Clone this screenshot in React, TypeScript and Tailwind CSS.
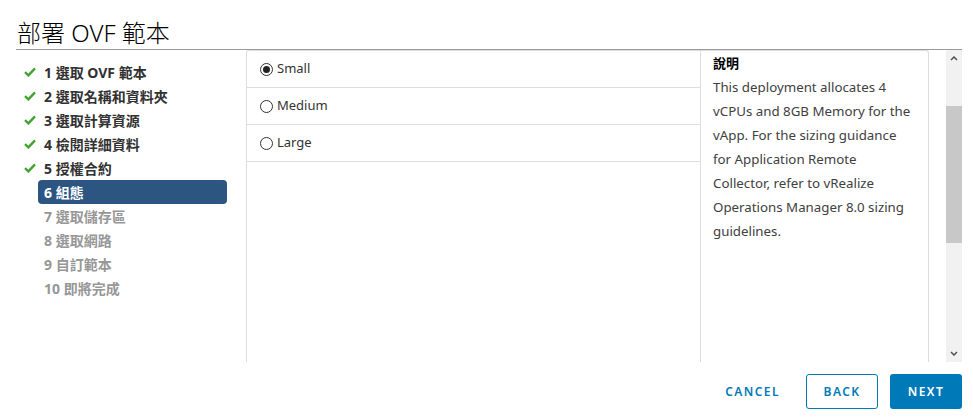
import React from 'react';

const steps = [
  { n: 1, label: '選取 OVF 範本', state: 'done' },
  { n: 2, label: '選取名稱和資料夾', state: 'done' },
  { n: 3, label: '選取計算資源', state: 'done' },
  { n: 4, label: '檢閱詳細資料', state: 'done' },
  { n: 5, label: '授權合約', state: 'done' },
  { n: 6, label: '組態', state: 'active' },
  { n: 7, label: '選取儲存區', state: 'todo' },
  { n: 8, label: '選取網路', state: 'todo' },
  { n: 9, label: '自訂範本', state: 'todo' },
  { n: 10, label: '即將完成', state: 'todo' },
];

const sizes = ['Small', 'Medium', 'Large'];

const descLines = [
  'This deployment allocates 4',
  'vCPUs and 8GB Memory for the',
  'vApp. For the sizing guidance',
  'for Application Remote',
  'Collector, refer to vRealize',
  'Operations Manager 8.0 sizing',
  'guidelines.',
];

function Check() {
  return (
    <svg width="12" height="10" viewBox="0 0 12 10" className="block">
      <path d="M1 5.2 L4.4 8.4 L11 1.4" fill="none" stroke="#43a332" strokeWidth="2.4" strokeLinejoin="miter" />
    </svg>
  );
}

function Radio({ checked }: { checked: boolean }) {
  return (
    <span className="w-[13px] h-[13px] rounded-full border border-[#333] flex items-center justify-center shrink-0 bg-white">
      {checked && <span className="w-[7px] h-[7px] rounded-full bg-[#222]" />}
    </span>
  );
}

export default function App() {
  return (
    <div
      className="w-[973px] h-[419px] bg-white flex flex-col overflow-hidden"
      style={{ fontFamily: '"Noto Sans", "Noto Sans CJK TC", sans-serif' }}
    >
      {/* header */}
      <div className="ml-4 mr-[11px] h-[50px] border-b border-[#9a9a9a] flex items-end pb-[2px] shrink-0">
        <h1 className="text-[24px] leading-[28px] font-light text-black pl-[1px]">部署 OVF 範本</h1>
      </div>

      {/* body */}
      <div className="flex h-[312px] shrink-0">
        {/* wizard nav */}
        <nav className="w-[246px] pl-4 pt-[10px] shrink-0">
          {steps.map((s) => (
            <div key={s.n} className="flex items-center h-6">
              <div className="w-[22px] pl-2 flex items-center">{s.state === 'done' && <Check />}</div>
              <div
                className={`w-[189px] h-6 pl-[6px] flex items-center rounded-[4px] text-[14px] font-bold whitespace-nowrap ${
                  s.state === 'active'
                    ? 'bg-[#2c5581] text-white'
                    : s.state === 'done'
                    ? 'text-[#313131]'
                    : 'text-[#979797]'
                }`}
              >
                {s.n} {s.label}
              </div>
            </div>
          ))}
        </nav>

        {/* content */}
        <div className="flex-1 flex pr-[11px]">
          <div className="w-[683px] flex border-l border-t border-r border-[#dddddd] rounded-t-[3px]">
            <div className="flex-1 flex flex-col">
              {sizes.map((s, i) => (
                <label key={s} className="h-[37px] border-b border-[#dddddd] flex items-center pl-[13px] gap-1 text-[13px] text-[#333]">
                  <Radio checked={i === 0} />
                  <span>{s}</span>
                </label>
              ))}
            </div>
            <div className="w-[228px] border-l border-[#dddddd] px-3 text-[13.3px] leading-6 text-[#404040] whitespace-nowrap">
              <div className="font-bold text-black text-[13px]">說明</div>
              {descLines.map((l) => (
                <div key={l}>{l}</div>
              ))}
            </div>
          </div>

          {/* scrollbar */}
          <div className="ml-[17px] w-4 bg-[#f1f1f1] flex flex-col">
            <div className="h-[17px] flex items-center justify-center">
              <svg width="8" height="5" viewBox="0 0 8 5">
                <path d="M1 4 L4 1 L7 4" fill="none" stroke="#505050" strokeWidth="1.5" />
              </svg>
            </div>
            <div className="h-[39px]" />
            <div className="h-[137px] bg-[#c8c8c8]" />
            <div className="flex-1" />
            <div className="h-[17px] flex items-center justify-center">
              <svg width="8" height="5" viewBox="0 0 8 5">
                <path d="M1 1 L4 4 L7 1" fill="none" stroke="#505050" strokeWidth="1.5" />
              </svg>
            </div>
          </div>
        </div>
      </div>

      {/* footer */}
      <div className="flex justify-end items-start gap-3 pt-[12px] pr-[11px]">
        <button className="h-[35px] px-[14px] text-[12px] font-semibold tracking-[0.12em] text-[#0079b8]">
          CANCEL
        </button>
        <button className="h-[35px] w-[72px] rounded-[3px] border border-[#0079b8] text-[12px] font-semibold tracking-[0.12em] text-[#0079b8]">
          BACK
        </button>
        <button className="h-[35px] w-[72px] rounded-[3px] bg-[#0079b8] text-[12px] font-semibold tracking-[0.12em] text-white">
          NEXT
        </button>
      </div>
    </div>
  );
}
